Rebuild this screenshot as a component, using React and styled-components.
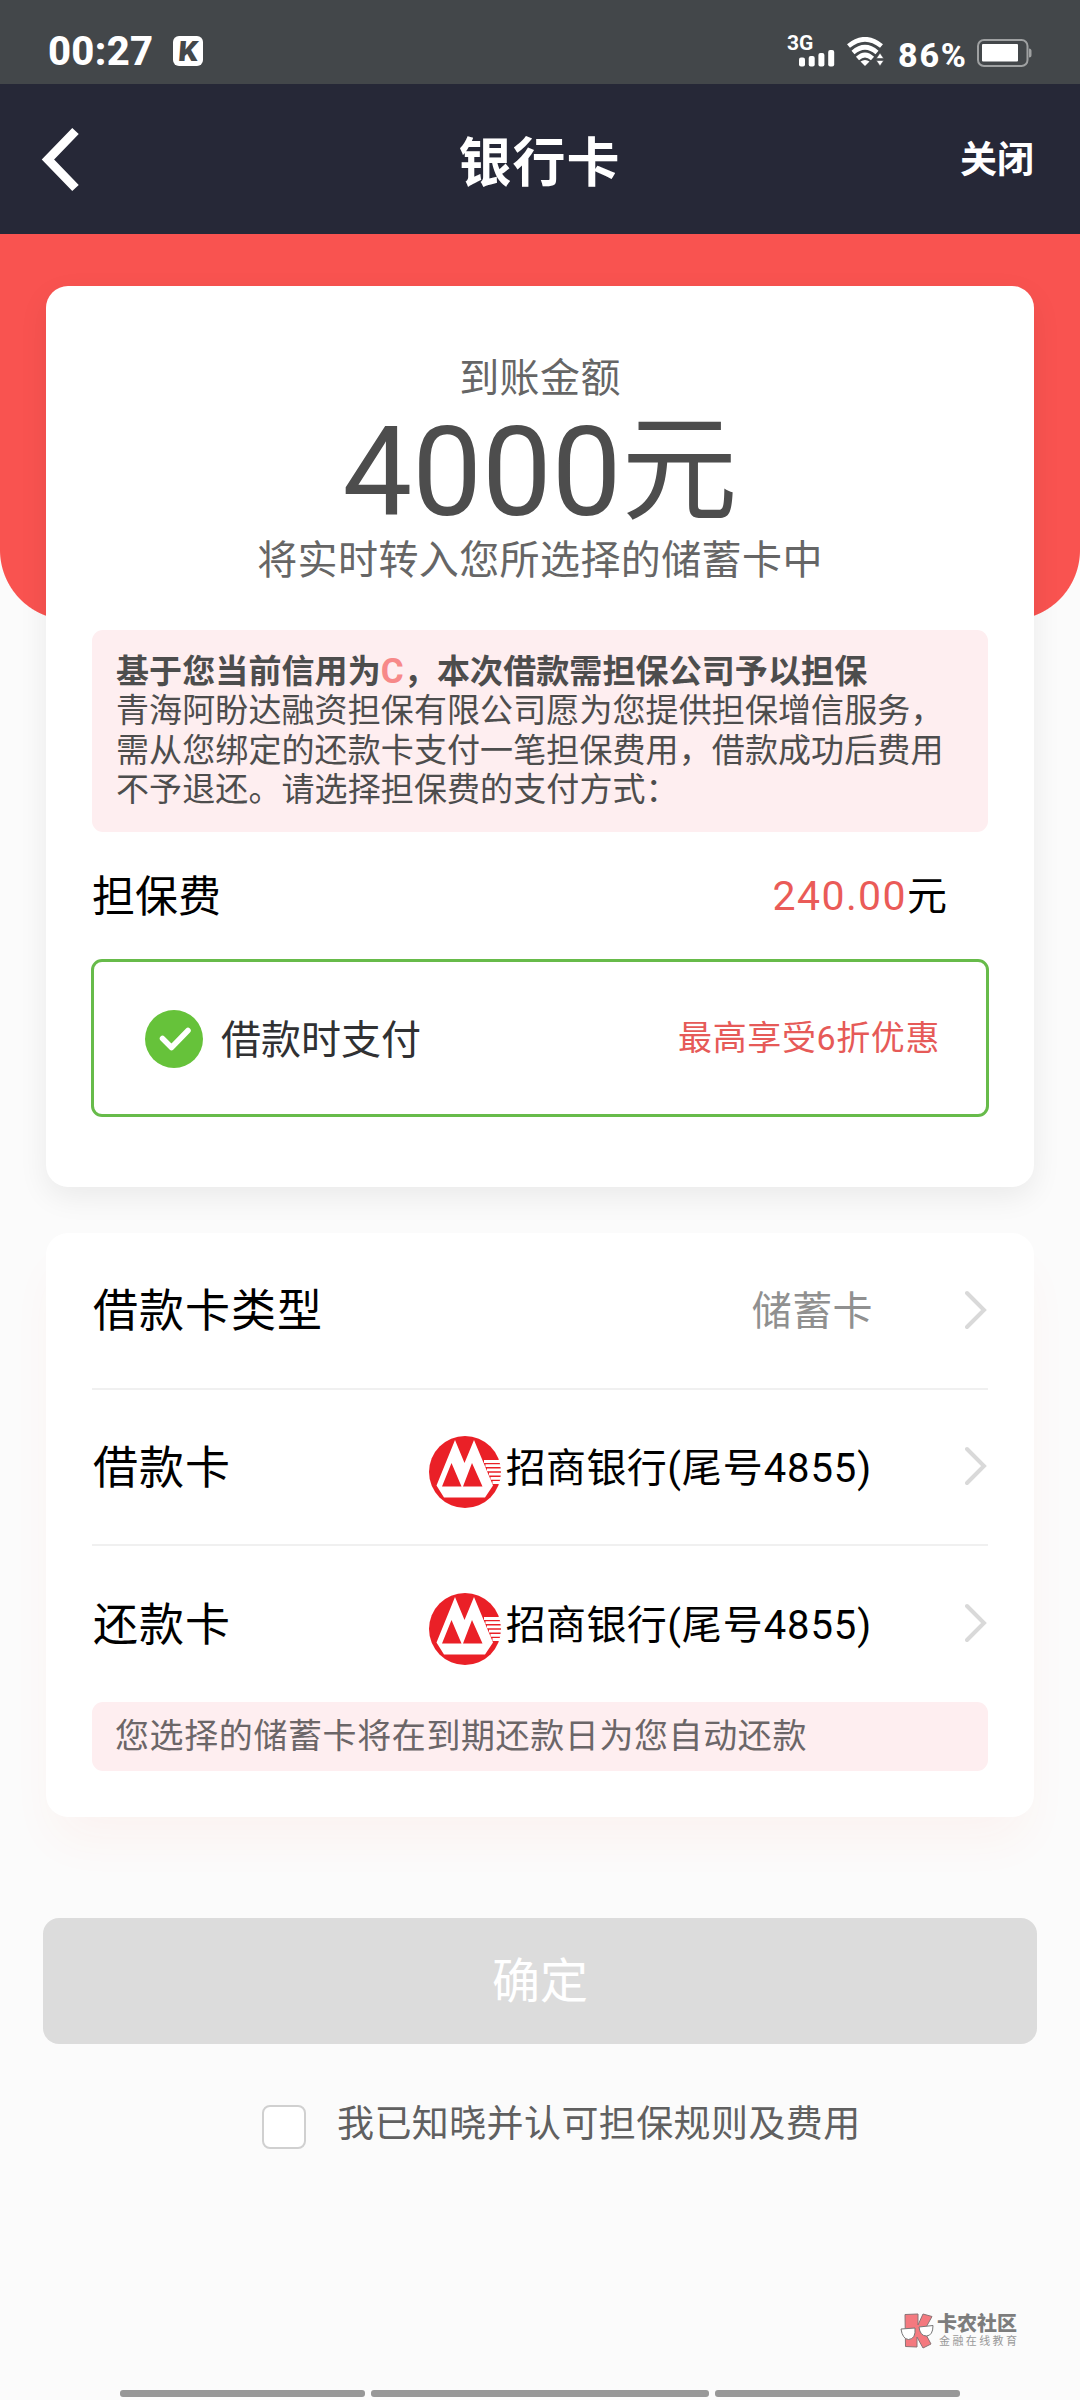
import React from 'react'
import styled, { createGlobalStyle } from 'styled-components'

const cards = [
  { id: 'type', label: '借款卡类型', value: '储蓄卡', muted: true, height: 157 },
  { id: 'loan', label: '借款卡', value: '招商银行', tail: '4855', height: 156 },
  { id: 'repay', label: '还款卡', value: '招商银行', tail: '4855', height: 156, last: true },
]

const SignalIcon = () => (
  <svg width='36' height='17' viewBox='0 0 36 17' fill='#fff'>
    <rect x='0' y='7.5' width='6' height='9' rx='2' />
    <rect x='9.7' y='6' width='6' height='10.5' rx='2' />
    <rect x='19.4' y='3' width='6' height='13.5' rx='2' />
    <rect x='29.2' y='0' width='6' height='16.5' rx='2' />
  </svg>
)

const WifiIcon = () => (
  <svg width='37' height='30' viewBox='0 0 37 30' fill='none' stroke='#fff' strokeWidth='4.6'>
    <path d='M1.5 9 Q18 -4.500 34.5 9' />
    <path d='M6 15.500 Q18 5 30 15.500' />
    <path d='M10.500 21.500 Q18 14.500 25.500 21.500' />
    <path d='M13.500 24.500 Q18 21.500 22.500 24.500 L18 29 Z' fill='#fff' stroke='none' />
    <path d='M33 16 L36.700 21.500 H29.300 Z M33 29 L36.700 23.500 H29.300 Z' fill='#fff' stroke='#43474a' strokeWidth='0.6' />
  </svg>
)

const BatteryIcon = () => (
  <svg width='55' height='28' viewBox='0 0 55 28'>
    <rect x='1' y='1' width='49.500' height='26' rx='6' fill='none' stroke='#9fa1a2' strokeWidth='2' />
    <rect x='5' y='5' width='36' height='17.500' rx='1' fill='#fff' />
    <path d='M52 9.500 q2.500 0 2.500 2.500 v4 q0 2.500 -2.500 2.500 Z' fill='#9fa1a2' />
  </svg>
)

const BackIcon = () => (
  <svg width='39' height='66' viewBox='0 0 39 66' fill='none' stroke='#fff' strokeWidth='9'>
    <path d='M34.500 5 L7 33.500 L34.500 62' />
  </svg>
)

const CheckIcon = () => (
  <svg width='58' height='58' viewBox='0 0 58 58'>
    <circle cx='29' cy='29' r='29' fill='#66c23a' />
    <path d='M17.500 28.500 L26.500 37.500 L43 20.500' fill='none' stroke='#fff' strokeWidth='5.500' strokeLinecap='round' strokeLinejoin='round' />
  </svg>
)

const ArrowIcon = () => (
  <svg width='23' height='40' viewBox='0 0 23 40' fill='none' stroke='#d9d9d9' strokeWidth='4' strokeLinecap='round'>
    <path d='M2 3 L19 20 L2 37' />
  </svg>
)

const BankLogo = () => (
  <LogoSvg width='72' height='72' viewBox='0 0 72 72'>
    <circle cx='36' cy='36' r='36' fill='#ea2027' />
    <path d='M26 4 L35.500 27 L45 4 L64 49.500 L56 61.500 H15 L7.500 49.500 Z' fill='#fff' />
    <path d='M22.500 27 L32.500 50.500 H13 Z M43 27 L53.500 50.500 H34 Z' fill='#ea2027' />
    <path d='M55 25.500 H71 M56.500 29.700 H72 M58 33.900 H72 M60 38.100 H72 M61.500 42.300 H72 M63.500 46.500 H71' stroke='#fff' strokeWidth='2.8' />
  </LogoSvg>
)

const GlassesLogo = () => (
  <svg width='35' height='36' viewBox='0 0 35 36'>
    <path d='M5 1.500 L18 1 L18 12 L23 1 L32 3.500 L24 18 L31 31 L23 35 L17 24 L17 34 L5.500 33.500 Z' fill='#f4797f' stroke='#8b7476' strokeWidth='1' />
    <path d='M1 16 L15 15 Q16 26 8.500 26.500 Q2.500 26 1 16 Z M19 14 L33 12.500 Q33 22.500 26.500 23 Q20 23 19 14 Z' fill='#fff' stroke='#777' strokeWidth='1' />
  </svg>
)

const App = () => {
  const [agreed, setAgreed] = React.useState(false)

  return (
    <Page>
      <GlobalStyle />
      <StatusBar>
        <Clock>00:27</Clock>
        <AppBadge><span>K</span></AppBadge>
        <StatusRight>
          <Signal>
            <Network>3G</Network>
            <SignalIcon />
          </Signal>
          <WifiIcon />
          <Percent>86%</Percent>
          <BatteryIcon />
        </StatusRight>
      </StatusBar>

      <NavBar>
        <NavSide><BackIcon /></NavSide>
        <NavTitle>银行卡</NavTitle>
        <NavSide $right>关闭</NavSide>
      </NavBar>

      <Content>
        <AmountCard>
          <Caption>到账金额</Caption>
          <Amount><b>4000</b>元</Amount>
          <Caption>将实时转入您所选择的储蓄卡中</Caption>

          <Notice>
            <strong>基于您当前信用为<em>C</em>，本次借款需担保公司予以担保</strong>
            <p>青海阿盼达融资担保有限公司愿为您提供担保增信服务，</p>
            <p>需从您绑定的还款卡支付一笔担保费用，借款成功后费用</p>
            <p>不予退还。请选择担保费的支付方式：</p>
          </Notice>

          <FeeRow>
            <span>担保费</span>
            <Fee><em>240.00</em>元</Fee>
          </FeeRow>

          <PayOption>
            <CheckIcon />
            <PayLabel>借款时支付</PayLabel>
            <Discount>最高享受6折优惠</Discount>
          </PayOption>
        </AmountCard>

        <ListCard>
          {cards.map((card) => (
            <CardRow key={card.id} $height={card.height} $last={card.last}>
              <RowLabel>{card.label}</RowLabel>
              {card.tail && <BankLogo />}
              <RowValue $muted={card.muted}>
                {card.value}
                {card.tail && <span>(尾号{card.tail})</span>}
              </RowValue>
              <ArrowIcon />
            </CardRow>
          ))}
          <Tip>您选择的储蓄卡将在到期还款日为您自动还款</Tip>
        </ListCard>

        <SubmitButton disabled={!agreed}>确定</SubmitButton>

        <Agreement>
          <Checkbox type='checkbox' checked={agreed} onChange={() => setAgreed(!agreed)} />
          我已知晓并认可担保规则及费用
        </Agreement>
      </Content>

      <Brand>
        <GlassesLogo />
        <BrandText>
          <BrandName>卡农社区</BrandName>
          <BrandSub>金融在线教育</BrandSub>
        </BrandText>
      </Brand>

      <GestureBar>
        <span />
        <span />
        <span />
      </GestureBar>
    </Page>
  )
}

export default App

const GlobalStyle = createGlobalStyle`
  * {
    box-sizing: border-box;
    margin: 0;
    padding: 0;
  }
  body {
    background: #fbfbfb;
    font-family: Roboto, 'Noto Sans CJK SC', sans-serif;
  }
  svg {
    display: block;
    flex-shrink: 0;
  }
  em {
    font-style: normal;
  }
`

const Page = styled.div`
  display: flex;
  flex-direction: column;
  width: 1080px;
  height: 2400px;
  overflow: hidden;
  background: #fbfbfb;
`

const StatusBar = styled.header`
  display: flex;
  align-items: flex-start;
  height: 84px;
  padding: 36px 48px 0 48px;
  background: #43474a;
  color: #fff;
`

const Clock = styled.div`
  width: 125px;
  font-size: 40px;
  font-weight: 800;
  line-height: 32px;
  letter-spacing: 0.3px;
`

const AppBadge = styled.div`
  width: 30px;
  height: 30px;
  border-radius: 6px;
  background: #fff;
  color: #43474a;
  font-size: 28px;
  font-weight: 900;
  line-height: 31px;
  text-align: center;
  span {
    display: block;
    transform: scaleX(1.1) skewX(-4deg);
  }
`

const StatusRight = styled.div`
  display: flex;
  margin-left: auto;
  height: 31px;
  align-items: flex-end;
`

const Signal = styled.div`
  display: flex;
  flex-direction: column;
  align-items: flex-end;
  margin-right: 12px;
  width: 48px;
`

const Network = styled.div`
  align-self: flex-start;
  height: 14px;
  font-size: 21px;
  font-weight: 700;
  line-height: 15px;
`

const Percent = styled.div`
  width: 93px;
  padding-left: 14px;
  font-size: 34px;
  font-weight: 800;
  line-height: 24px;
  letter-spacing: 1.8px;
`

const NavBar = styled.nav`
  display: flex;
  align-items: center;
  justify-content: space-between;
  height: 150px;
  padding: 0 46px 0 41px;
  background: #262837;
  color: #fff;
`

const NavSide = styled.div`
  display: flex;
  width: 160px;
  justify-content: ${(props) => (props.$right ? 'flex-end' : 'flex-start')};
  font-size: 37px;
  font-weight: 700;
  line-height: 54px;
  padding-top: ${(props) => (props.$right ? '4px' : '0')};
`

const NavTitle = styled.h1`
  padding-left: 4px;
  font-size: 53px;
  font-weight: 700;
  letter-spacing: 1px;
`

const Content = styled.main`
  display: flex;
  flex-direction: column;
  align-items: center;
  padding-top: 52px;
  /* red header block behind the first card */
  background: radial-gradient(circle at 70px 316px, #f95350 69.5px, transparent 70.5px) 0 0 / 70px 386px no-repeat,
    radial-gradient(circle at 0 316px, #f95350 69.5px, transparent 70.5px) 100% 0 / 70px 386px no-repeat,
    linear-gradient(#f95350, #f95350) 0 0 / 100% 316px no-repeat,
    linear-gradient(#f95350, #f95350) 50% 0 / 940px 386px no-repeat;
`

const AmountCard = styled.section`
  display: flex;
  flex-direction: column;
  align-items: center;
  width: 988px;
  height: 901px;
  padding: 63px 46px 0;
  border-radius: 22px;
  background: #fff;
  box-shadow: 0 10px 30px rgba(0, 0, 0, 0.07);
`

const Caption = styled.div`
  color: #666;
  font-size: 40px;
  letter-spacing: 0.4px;
  line-height: 60px;
`

const Amount = styled.div`
  display: flex;
  height: 122px;
  color: #4d4d4d;
  font-size: 116px;
  line-height: 122px;
  b {
    font-size: 124px;
    font-weight: 400;
    line-height: 128px;
  }
`

const Notice = styled.div`
  width: 896px;
  height: 202px;
  margin-top: 39px;
  padding: 22px 24px 0;
  border-radius: 11px;
  background: #feeef0;
  color: #4d4d4d;
  font-size: 33px;
  line-height: 39.3px;
  letter-spacing: 0.1px;
  white-space: nowrap;
  strong {
    display: block;
  }
  em {
    color: #f78989;
    font-size: 35px;
    line-height: 1;
  }
`

const FeeRow = styled.div`
  display: flex;
  align-items: center;
  justify-content: space-between;
  width: 896px;
  height: 127px;
  padding-bottom: 5px;
  font-size: 43px;
  color: #000;
`

const Fee = styled.div`
  padding-right: 41px;
  font-size: 40px;
  em {
    color: #ea5b58;
    font-size: 41px;
    letter-spacing: 1.4px;
  }
`

const PayOption = styled.div`
  display: flex;
  align-items: center;
  width: 898px;
  height: 158px;
  padding: 2px 46px 0 51px;
  border: 3px solid #67bb4a;
  border-radius: 11px;
`

const PayLabel = styled.span`
  margin-left: 18px;
  padding-bottom: 5px;
  color: #303133;
  font-size: 40px;
`

const Discount = styled.span`
  margin-left: auto;
  padding-bottom: 7px;
  color: #e65a58;
  font-size: 34px;
  letter-spacing: 0.6px;
`

const ListCard = styled.section`
  width: 988px;
  height: 584px;
  margin-top: 46px;
  padding: 0 46px;
  border-radius: 22px;
  background: #fff;
  box-shadow: 0 30px 50px -10px rgba(250, 84, 40, 0.05);
`

const CardRow = styled.div`
  display: flex;
  align-items: center;
  height: ${(props) => props.$height}px;
  border-bottom: ${(props) => (props.$last ? 'none' : '2px solid #f0f0f0')};
  padding-bottom: ${(props) => (props.$last ? '2px' : '2px')};
`

const LogoSvg = styled.svg`
  margin-top: 11px;
`

const RowLabel = styled.span`
  margin-right: auto;
  padding-left: 1px;
  padding-bottom: 4px;
  font-size: 45px;
  letter-spacing: 1px;
  color: #000;
`

const RowValue = styled.span`
  margin: 0 ${(props) => (props.$muted ? '92px' : '93px')} 0 5px;
  padding-bottom: 3px;
  font-size: 40px;
  letter-spacing: 0.4px;
  color: ${(props) => (props.$muted ? '#909090' : '#000')};
  span {
    letter-spacing: 0.9px;
  }
`

const Tip = styled.div`
  height: 69px;
  padding-left: 23px;
  border-radius: 11px;
  background: #feeef0;
  color: #6b6668;
  font-size: 34px;
  letter-spacing: 0.6px;
  line-height: 68px;
`

const SubmitButton = styled.button`
  width: 994px;
  height: 126px;
  margin-top: 101px;
  padding-bottom: 9px;
  border: none;
  border-radius: 16px;
  background: #dcdcdc;
  color: #fff;
  font-family: inherit;
  font-size: 48px;
`

const Agreement = styled.label`
  display: flex;
  align-items: center;
  margin-top: 50px;
  height: 54px;
  align-self: flex-start;
  margin-left: 262px;
  color: #606060;
  font-size: 37px;
  letter-spacing: 0.4px;
`

const Checkbox = styled.input`
  appearance: none;
  width: 44px;
  height: 44px;
  margin: 11px 31px 0 0;
  border: 2px solid #d0d0d0;
  border-radius: 8px;
  background: #fff;
`

const Brand = styled.footer`
  display: flex;
  align-self: flex-end;
  margin-top: auto;
  margin-right: 60px;
  height: 36px;
  margin-bottom: 41px;
`

const BrandText = styled.div`
  margin-left: 2px;
  padding-top: 1px;
  white-space: nowrap;
`

const BrandName = styled.div`
  color: #7d7d7d;
  font-size: 20px;
  font-weight: 900;
  line-height: 20px;
  width: 83px;
`

const BrandSub = styled.div`
  margin-left: 2px;
  color: #999;
  font-size: 11px;
  letter-spacing: 2.4px;
  line-height: 15px;
  width: 81px;
`

const GestureBar = styled.div`
  display: grid;
  grid-template-columns: 245px 338px 245px;
  gap: 6px;
  height: 10px;
  margin-left: 120px;
  span {
    height: 7px;
    border-radius: 3px;
    background: #979797;
  }
`
